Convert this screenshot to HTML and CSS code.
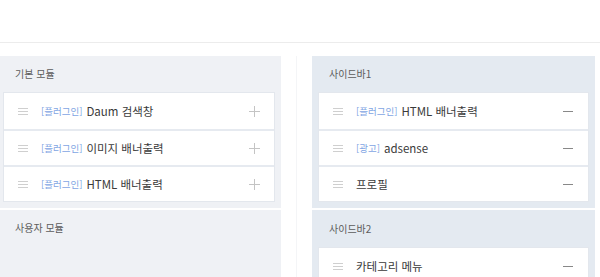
FILE: index.html
```html
<!DOCTYPE html>
<html lang="ko">
<head>
<meta charset="utf-8">
<link rel="stylesheet" href="styles.css">
</head>
<body>
<div class="header"></div>
<div class="columns">
  <div class="col col-left">
    <section class="panel panel-gray">
      <div class="panel-title">기본 모듈</div>
      <ul class="card">
        <li class="row"><span class="grip"></span><span class="tag">[플러그인]</span><span class="name">Daum 검색창</span><span class="plus"></span></li>
        <li class="row"><span class="grip"></span><span class="tag">[플러그인]</span><span class="name">이미지 배너출력</span><span class="plus"></span></li>
        <li class="row"><span class="grip"></span><span class="tag">[플러그인]</span><span class="name">HTML 배너출력</span><span class="plus"></span></li>
      </ul>
    </section>
    <section class="panel panel-gray panel-fill">
      <div class="panel-title">사용자 모듈</div>
    </section>
  </div>
  <div class="divider"></div>
  <div class="col col-right">
    <section class="panel panel-blue">
      <div class="panel-title">사이드바1</div>
      <ul class="card">
        <li class="row"><span class="grip"></span><span class="tag">[플러그인]</span><span class="name">HTML 배너출력</span><span class="minus"></span></li>
        <li class="row"><span class="grip"></span><span class="tag">[광고]</span><span class="name">adsense</span><span class="minus"></span></li>
        <li class="row"><span class="grip"></span><span class="name">프로필</span><span class="minus"></span></li>
      </ul>
    </section>
    <section class="panel panel-blue panel-fill">
      <div class="panel-title">사이드바2</div>
      <ul class="card">
        <li class="row"><span class="grip"></span><span class="name">카테고리 메뉴</span><span class="minus"></span></li>
      </ul>
    </section>
  </div>
</div>
</body>
</html>
```
FILE: styles.css
```css
* { box-sizing: border-box; }
html, body {
  margin: 0;
  padding: 0;
  background: #ffffff;
  overflow: hidden;
  height: 277px;
}
body {
  font-family: "Noto Sans CJK KR", "Noto Sans", sans-serif;
  color: #333;
}
.header {
  height: 43px;
  border-bottom: 1px solid #ececec;
}
.columns {
  margin-top: 13px;
  display: flex;
  margin-left: -3px;
}
.col {
  display: flex;
  flex-direction: column;
  gap: 2px;
}
.col-left { width: 284px; }
.col-right { width: 283px; }
.divider {
  width: 31px;
}
.divider::after {
  content: "";
  display: block;
  margin-left: 15px;
  width: 1px;
  height: 230px;
  background: #f4f5f7;
}
.panel {
  padding: 0 6px 6px 6px;
}
.panel-gray { background: #eff1f5; }
.panel-blue { background: #e4eaf1; }
.panel-fill { height: 80px; }
.panel-title {
  height: 36px;
  line-height: 36px;
  font-size: 10px;
  color: #5c5c5c;
  padding-left: 12px;
}
.col-right .panel-title { padding-left: 11px; }
.col-right .panel-fill .panel-title { height: 37px; line-height: 37px; }
.card {
  list-style: none;
  margin: 0;
  padding: 0;
  background: #fff;
  border: 1px solid #e3e7ed;
}
.row {
  height: 36px;
  display: flex;
  align-items: center;
  padding: 0 14px 0 14px;
  font-size: 11.5px;
}
.row + .row { border-top: 2px solid #e6eaf0; }
.grip {
  width: 10px;
  height: 7px;
  border-top: 1px solid #cfcfcf;
  border-bottom: 1px solid #cfcfcf;
  position: relative;
  margin-right: 13px;
  flex: none;
}
.grip::after {
  content: "";
  position: absolute;
  left: 0;
  right: 0;
  top: 2px;
  height: 1px;
  background: #cfcfcf;
}
.tag {
  font-size: 9.5px;
  color: #7fa5e3;
  margin-right: 4px;
}
.name {
  color: #3a3a3a;
  flex: 1;
}
.plus {
  width: 11px;
  height: 11px;
  position: relative;
  flex: none;
}
.plus::before, .plus::after {
  content: "";
  position: absolute;
  background: #c4c4c4;
}
.plus::before { left: 0; right: 0; top: 5px; height: 1px; }
.plus::after { top: 0; bottom: 0; left: 5px; width: 1px; }
.minus {
  width: 10px;
  height: 1px;
  background: #888;
  flex: none;
  margin-right: 1px;
}
```
